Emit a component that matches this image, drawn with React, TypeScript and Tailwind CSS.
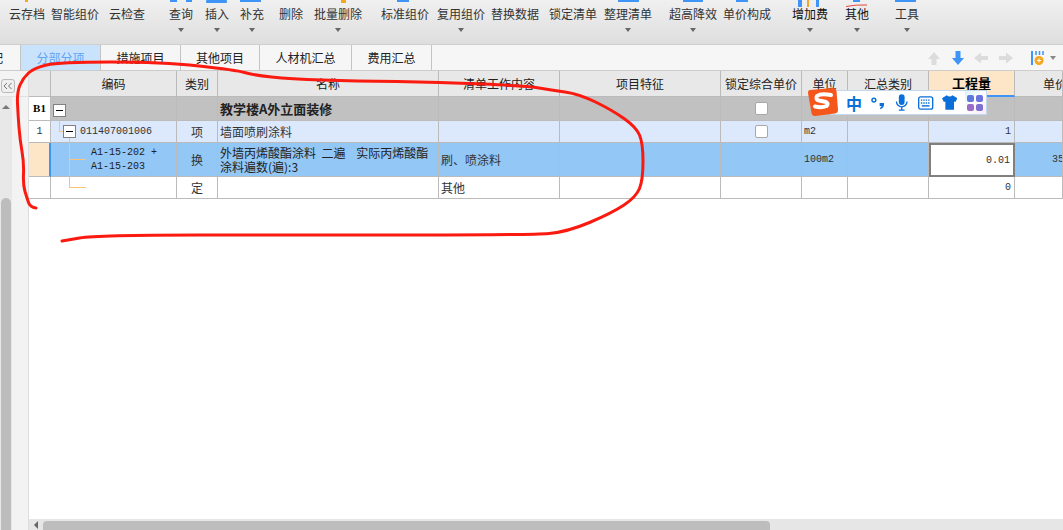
const FONT = "font-['Noto_Sans_CJK_SC','Liberation_Sans',sans-serif]";
const MONO = "font-['Liberation_Mono',monospace] text-[10px]";

const tools = [
  { label: "云存档", cls: "w-[36px] ml-[9px]", arrow: false },
  { label: "智能组价", cls: "w-[48px] ml-[6px]", arrow: false },
  { label: "云检查", cls: "w-[36px] ml-[10px]", arrow: false },
  { label: "查询", cls: "w-[24px] ml-[24px]", arrow: true },
  { label: "插入", cls: "w-[24px] ml-[12px]", arrow: true },
  { label: "补充", cls: "w-[24px] ml-[11px]", arrow: true },
  { label: "删除", cls: "w-[24px] ml-[15px]", arrow: false },
  { label: "批量删除", cls: "w-[48px] ml-[11px]", arrow: true },
  { label: "标准组价", cls: "w-[48px] ml-[19px]", arrow: false },
  { label: "复用组价", cls: "w-[48px] ml-[8px]", arrow: true },
  { label: "替换数据", cls: "w-[48px] ml-[6px]", arrow: false },
  { label: "锁定清单", cls: "w-[48px] ml-[10px]", arrow: false },
  { label: "整理清单", cls: "w-[48px] ml-[7px]", arrow: true },
  { label: "超高降效", cls: "w-[48px] ml-[17px]", arrow: true },
  { label: "单价构成", cls: "w-[48px] ml-[6px]", arrow: false },
  { label: "增加费", cls: "w-[36px] ml-[21px] text-[#111]", arrow: true },
  { label: "其他", cls: "w-[24px] ml-[17px] text-[#111]", arrow: true },
  { label: "工具", cls: "w-[24px] ml-[26px]", arrow: true },
];

const tabs = [
  { label: "分部分项", cls: "w-[80px] bg-[#c9e3fd] text-[#5ea5f5]" },
  { label: "措施项目", cls: "w-[80px]" },
  { label: "其他项目", cls: "w-[79px]" },
  { label: "人材机汇总", cls: "w-[92px]" },
  { label: "费用汇总", cls: "w-[80px]" },
];

const GRID =
  "grid grid-cols-[22px_126px_41px_221px_121px_161px_81px_46px_81px_86px_1fr]";
const CELL = "border-r border-b border-[#bbbbbb] flex items-center min-w-0 overflow-hidden";
const LINE = "bg-[#fbc27c]";

const headers = ["", "编码", "类别", "名称", "清单工作内容", "项目特征", "锁定综合单价", "单位", "汇总类别"];

// hand-drawn red ring, traced from the picture
const ring: [number, number][] = [
  [36, 208], [30, 207], [27, 198], [23, 185], [24, 163], [20, 140], [18, 115], [17, 92], [23, 78], [34, 68],
  [59, 62], [162, 62], [236, 70], [253, 75], [290, 79], [355, 81], [439, 82], [527, 86], [551, 90], [579, 94],
  [612, 110], [636, 127], [643, 143], [643, 180], [636, 197], [612, 213], [567, 232], [531, 235], [300, 235],
  [97, 235], [62, 241],
];

function smooth(pts: [number, number][]) {
  let d = `M${pts[0][0]} ${pts[0][1]}`;
  for (let i = 1; i < pts.length - 1; i++) {
    const mx = (pts[i][0] + pts[i + 1][0]) / 2;
    const my = (pts[i][1] + pts[i + 1][1]) / 2;
    d += ` Q${pts[i][0]} ${pts[i][1]} ${mx} ${my}`;
  }
  const last = pts[pts.length - 1];
  return `${d} L${last[0]} ${last[1]}`;
}

function Toggle() {
  return (
    <div className="w-[13px] h-[13px] border border-[#808080] bg-white flex items-center justify-center shrink-0 relative">
      <div className="w-[7px] h-px bg-black" />
    </div>
  );
}

function Check() {
  return <div className="w-[13px] h-[13px] rounded-[2px] border border-[#a8a8a8] bg-white" />;
}

function Arrow({ d, fill }: { d: string; fill: string }) {
  return (
    <svg width="16" height="16" viewBox="0 0 16 16">
      <path d={d} fill={fill} />
    </svg>
  );
}

function Sogou() {
  return (
    <div className="absolute left-[808px] top-[88px] w-[180px] h-[28px]">
      <div className="absolute left-[22px] top-[2px] w-[157px] h-[25px] bg-white border border-[#c4d8ee] flex items-center text-[#0a6fd8]">
        <span className="ml-[15px] w-[17px] text-[16px] font-bold leading-none">中</span>
        <svg className="ml-[9px]" width="15" height="16" viewBox="0 0 15 16">
          <circle cx="3" cy="5" r="2" fill="none" stroke="#0a6fd8" strokeWidth="1.5" />
          <path d="M9 8 h4.5 v2 q0 3 -4 4.5 l0 -1.6 q1.4 -.6 1.6 -1.9 H9z" fill="#0a6fd8" />
        </svg>
        <svg className="ml-[9px]" width="14" height="18" viewBox="0 0 14 18">
          <rect x="4" y="0" width="6" height="11" rx="3" fill="#0a6fd8" />
          <path d="M1.5 7.5 a5.5 5.5 0 0 0 11 0 M7 13 v3 M4 16.5 h6" fill="none" stroke="#0a6fd8" strokeWidth="1.4" />
        </svg>
        <svg className="ml-[10px]" width="16" height="14" viewBox="0 0 16 14">
          <rect x=".7" y=".7" width="14.6" height="12.6" rx="2" fill="none" stroke="#0a6fd8" strokeWidth="1.4" />
          <path d="M3 4 h10 M3 7 h10" stroke="#0a6fd8" strokeWidth="1.4" strokeDasharray="1.5 1" />
          <path d="M4 10 h8" stroke="#0a6fd8" strokeWidth="1.5" />
        </svg>
        <svg className="ml-[8px]" width="16" height="15" viewBox="0 0 16 15">
          <path d="M5 0 Q8 2.5 11 0 L16 3 L14 7 L12.5 6.5 V15 H3.5 V6.5 L2 7 L0 3z" fill="#0a6fd8" />
        </svg>
        <div className="ml-[8px] w-[22px] h-[23px] bg-[linear-gradient(135deg,#d8f4f8,#ffffff_45%,#f8e8fb)] flex items-center justify-center">
          <div className="grid grid-cols-2 gap-[2px]">
            <div className="w-[7px] h-[7px] rounded-[2px] bg-[#5f78e0]" />
            <div className="w-[7px] h-[7px] rounded-[2px] bg-[#6a74dc]" />
            <div className="w-[7px] h-[7px] rounded-[2px] bg-[#9c6cc8]" />
            <div className="w-[7px] h-[7px] rounded-[2px] bg-[#7d70d0]" />
          </div>
        </div>
      </div>
      <svg className="absolute left-0 top-0" width="30" height="28" viewBox="0 0 30 28">
        <path d="M2 2 L25 0 Q28 0 28.5 3 L30 22 Q30 25 27 25.5 L7 28 Q4 28 3.5 25 L0 5 Q0 2 2 2z" fill="#f4561c" />
        <path
          d="M23 7 Q13 5 9 8 Q7 11.5 11 12.5 L18 14 Q21 15.5 18.5 18 Q14 20 7 18.5"
          fill="none"
          stroke="#ffffff"
          strokeWidth="4"
          strokeLinecap="round"
        />
      </svg>
    </div>
  );
}

export default function App() {
  return (
    <div className={`relative w-[1063px] h-[530px] overflow-hidden bg-white text-[12px] text-[#333] ${FONT}`}>
      {/* Toolbar */}
      <div className="h-[45px] flex items-start bg-[linear-gradient(#f0f0f0,#dedede)] border-b border-[#cfcfcf]">
        {tools.map((t) => (
          <div key={t.label} className={`${t.cls} shrink-0 flex flex-col items-center pt-[6px]`}>
            <span className="leading-[15px] whitespace-nowrap">{t.label}</span>
            {t.arrow && (
              <div className="mt-[7px] w-0 h-0 border-x-[3px] border-x-transparent border-t-[4px] border-t-[#666]" />
            )}
          </div>
        ))}
      </div>

      {/* Tabs */}
      <div className="h-[26px] flex bg-[#f6f6f6] border-b border-[#cccccc] text-[#222]">
        <div className="w-[21px] border-r border-[#c4c4c4] flex items-center justify-end overflow-hidden">
          <span className="shrink-0 pr-[17px]">配</span>
        </div>
        {tabs.map((t) => (
          <div key={t.label} className={`${t.cls} border-r border-[#c4c4c4] flex items-center justify-center`}>
            {t.label}
          </div>
        ))}
        <div className="ml-auto flex items-center">
          <Arrow fill="#dcdcdc" d="M8 2 L14 9 H10.5 V15 H5.5 V9 H2z" />
          <div className="w-[8px]" />
          <Arrow fill="#3f94f8" d="M5.5 1 H10.5 V8 H14 L8 15 L2 8 H5.5z" />
          <div className="w-[7px]" />
          <Arrow fill="#dcdcdc" d="M1 8 L8 2.5 V6 H15 V10 H8 V13.5z" />
          <div className="w-[9px]" />
          <Arrow fill="#dcdcdc" d="M15 8 L8 2.5 V6 H1 V10 H8 V13.5z" />
          <div className="w-[17px]" />
          <svg width="14" height="16" viewBox="0 0 14 16">
            <path d="M1 1 V15" stroke="#3f94f8" strokeWidth="2" />
            <path d="M5 1 V5 M8.5 1 V5 M12 1 V5" stroke="#3f94f8" strokeWidth="1.5" />
            <circle cx="8" cy="10.5" r="4.5" fill="#f5a623" />
            <path d="M6 10.5 H10 M8 8.5 V12.5" stroke="#fff" strokeWidth="1" />
          </svg>
          <div className="ml-[5px] mr-[7px] w-0 h-0 border-x-[3px] border-x-transparent border-t-[4px] border-t-[#888]" />
        </div>
      </div>

      {/* Main */}
      <div className="h-[459px] flex">
        {/* Left rail */}
        <div className="w-[29px] shrink-0 bg-[#f3f3f3] border-r border-[#dddddd]">
          <div className="h-[26px] border-b border-[#e2e2e2] pt-[8px] pl-px">
            <div className="w-[14px] h-[14px] rounded-[3px] border border-[#bbbbbb] bg-[#efefef] flex items-center justify-center">
              <svg width="10" height="8" viewBox="0 0 10 8">
                <path d="M4 1 L1 4 L4 7 M8.5 1 L5.5 4 L8.5 7" fill="none" stroke="#777" />
              </svg>
            </div>
          </div>
          <div className="w-[12px] h-[433px] bg-[#e8e8e8] flex flex-col items-center pt-[8px]">
            <div className="w-0 h-0 border-x-[4px] border-x-transparent border-b-[4px] border-b-[#777]" />
            <div className="mt-[89px] w-[10px] flex-1 rounded-t-[5px] bg-[#bdbdbd]" />
          </div>
        </div>

        {/* Sheet */}
        <div className="flex-1 min-w-0 flex flex-col">
          <div className="flex-1">
            <div className={`${GRID} h-[26px] bg-[#e8e8e8] text-[#222]`}>
              {headers.map((h, i) => (
                <div key={i} className={`${CELL} justify-center whitespace-nowrap`}>
                  {h}
                </div>
              ))}
              <div className="border-r border-b-2 border-[#bbbbbb] border-b-[#3f94f8] bg-[#fde6c8] flex items-center justify-center font-bold text-[13px] text-black">
                工程量
              </div>
              <div className={`${CELL} pl-[28px] whitespace-nowrap`}>单价</div>
            </div>

            {/* B1 */}
            <div className={`${GRID} h-[24px] bg-[#c1c1c1]`}>
              <div className={`${CELL} justify-center bg-white font-['Liberation_Serif',serif] text-[11px] font-bold text-black`}>B1</div>
              <div className={`${CELL} relative pl-[2px] pt-[3px]`}>
                <div className={`absolute left-[8px] top-[18px] w-px h-[6px] ${LINE}`} />
                <Toggle />
              </div>
              <div className={CELL} />
              <div className={`${CELL} pl-[2px] font-bold text-[13px] text-[#222]`}>教学楼A外立面装修</div>
              <div className={CELL} />
              <div className={CELL} />
              <div className={`${CELL} justify-center`}>
                <Check />
              </div>
              <div className={CELL} />
              <div className={CELL} />
              <div className={CELL} />
              <div className={CELL} />
            </div>

            {/* Row 1 */}
            <div className={`${GRID} h-[22px] bg-[#dce9fd]`}>
              <div className={`${CELL} justify-center bg-white ${MONO}`}>1</div>
              <div className={`${CELL} relative pl-[12px]`}>
                <div className={`absolute left-[8px] top-0 w-px h-[10px] ${LINE}`} />
                <div className={`absolute left-[8px] top-[10px] w-[4px] h-px ${LINE}`} />
                <div className={`absolute left-[18px] top-[17px] w-px h-[5px] ${LINE}`} />
                <Toggle />
                <span className={`ml-[4px] ${MONO}`}>011407001006</span>
              </div>
              <div className={`${CELL} justify-center`}>项</div>
              <div className={`${CELL} pl-[2px]`}>墙面喷刷涂料</div>
              <div className={CELL} />
              <div className={CELL} />
              <div className={`${CELL} justify-center`}>
                <Check />
              </div>
              <div className={`${CELL} pl-[2px] ${MONO}`}>m2</div>
              <div className={CELL} />
              <div className={`${CELL} justify-end pr-[3px] ${MONO}`}>1</div>
              <div className={CELL} />
            </div>

            {/* Selected row */}
            <div className={`${GRID} h-[34px] bg-[#92c7f6]`}>
              <div className={`${CELL} bg-[#fde6c8] border-r-2 border-r-[#3f94f8]`} />
              <div className={`${CELL} relative pl-[40px] ${MONO} leading-[14px] text-[#222]`}>
                <div className={`absolute left-[18px] top-0 w-px h-[34px] ${LINE}`} />
                <div className={`absolute left-[18px] top-[16px] w-[17px] h-px ${LINE}`} />
                <span>
                  A1-15-202 +<br />A1-15-203
                </span>
              </div>
              <div className={`${CELL} justify-center`}>换</div>
              <div className={`${CELL} pl-[2px] leading-[14px] whitespace-pre-wrap text-[#222]`}>
                {"外墙丙烯酸酯涂料  二遍    实际丙烯酸酯\n涂料遍数(遍):3"}
              </div>
              <div className={`${CELL} pl-[2px]`}>刷、喷涂料</div>
              <div className={CELL} />
              <div className={CELL} />
              <div className={`${CELL} pl-[2px] ${MONO}`}>100m2</div>
              <div className={CELL} />
              <div className={`bg-white border-2 border-[#808080] flex items-center justify-end pr-[3px] ${MONO}`}>0.01</div>
              <div className={`${CELL} pl-[37px] ${MONO}`}>35</div>
            </div>

            {/* Row 定 */}
            <div className={`${GRID} h-[22px]`}>
              <div className={CELL} />
              <div className={`${CELL} relative`}>
                <div className={`absolute left-[18px] top-0 w-px h-[10px] ${LINE}`} />
                <div className={`absolute left-[18px] top-[10px] w-[17px] h-px ${LINE}`} />
              </div>
              <div className={`${CELL} justify-center`}>定</div>
              <div className={CELL} />
              <div className={`${CELL} pl-[2px]`}>其他</div>
              <div className={CELL} />
              <div className={CELL} />
              <div className={CELL} />
              <div className={CELL} />
              <div className={`${CELL} justify-end pr-[3px] ${MONO}`}>0</div>
              <div className={CELL} />
            </div>
          </div>

          {/* Horizontal scrollbar */}
          <div className="h-[11px] bg-[#e6e6e6] flex items-end pl-[5px]">
            <div className="w-0 h-0 mb-[1px] border-y-[4px] border-y-transparent border-r-[4px] border-r-[#666]" />
            <div className="ml-[5px] w-[727px] h-[9px] rounded-t-[4px] bg-[#bdbdbd]" />
          </div>
        </div>
      </div>

      <Sogou />

      {/* Toolbar icons clipped by the top of the window */}
      <svg className="absolute left-0 top-0 pointer-events-none" width="1063" height="7" viewBox="0 0 1063 7">
        <rect x="25" y="0" width="3" height="2" fill="#f5a623" />
        <rect x="170" y="0" width="7" height="2" fill="#3f94f8" />
        <rect x="186" y="0" width="6" height="2" fill="#3f94f8" />
        <rect x="206" y="0" width="21" height="3" rx="1" fill="#3f94f8" />
        <rect x="240" y="0" width="21" height="2" fill="#3f94f8" />
        <rect x="341" y="0" width="5" height="3" fill="#f5a623" />
        <rect x="397" y="0" width="12" height="2" fill="#3f94f8" />
        <rect x="618" y="0" width="21" height="2" fill="#3f94f8" />
        <rect x="683" y="0" width="20" height="2" fill="#3f94f8" />
        <rect x="736" y="0" width="12" height="2" fill="#3f94f8" />
        <rect x="798" y="0" width="4" height="7" fill="#3f94f8" />
        <rect x="807" y="0" width="2" height="7" fill="#f5a623" />
        <rect x="816" y="0" width="3" height="7" fill="#3f94f8" />
        <rect x="853" y="0" width="7" height="2" fill="#3f94f8" />
        <path d="M846 6.5 Q856 4.5 867 5" stroke="#e8453c" strokeWidth="1" fill="none" />
        <rect x="895" y="0" width="21" height="2" fill="#3f94f8" />
      </svg>

      {/* Red hand-drawn annotation */}
      <svg className="absolute left-0 top-0 pointer-events-none" width="1063" height="530" viewBox="0 0 1063 530">
        <path
          d={smooth(ring)}
          fill="none"
          stroke="#fa1a10"
          strokeWidth="3"
          strokeLinejoin="round"
          strokeLinecap="round"
        />
      </svg>
    </div>
  );
}
